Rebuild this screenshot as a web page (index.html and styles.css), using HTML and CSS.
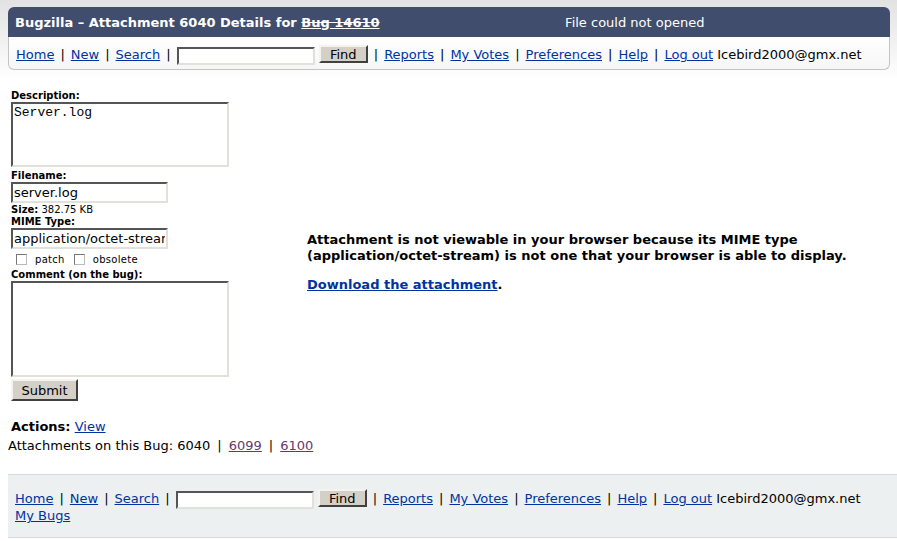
FILE: index.html
```html
<!DOCTYPE html>
<html lang="en">
<head>
    <meta charset="UTF-8">
    <title>Attachment 6040 Details for Bug 14610</title>
    <link rel="stylesheet" href="styles.css">
</head>
<body>
    <div class="header">
        <div class="title">Bugzilla &ndash; Attachment 6040 Details for <a href="#" class="bug-link">Bug 14610</a></div>
        <div class="message">File could not opened</div>
    </div>
    <div class="links top-links">
        <a href="#">Home</a><span class="sep">|</span><a href="#">New</a><span class="sep">|</span><a href="#">Search</a><span class="sep">|</span><input type="text" class="quicksearch"> <button class="btn find">Find</button><span class="sep">|</span><a href="#">Reports</a><span class="sep">|</span><a href="#">My Votes</a><span class="sep">|</span><a href="#">Preferences</a><span class="sep">|</span><a href="#">Help</a><span class="sep">|</span><a href="#">Log out</a> Icebird2000@gmx.net
    </div>

    <div class="attachment">
        <form class="edit-form">
            <label class="field-label">Description:</label>
            <textarea class="desc" rows="3">Server.log</textarea>
            <label class="field-label">Filename:</label>
            <input type="text" class="field" value="server.log">
            <div class="small"><b>Size:</b> 382.75 KB</div>
            <label class="field-label">MIME Type:</label>
            <input type="text" class="field" value="application/octet-stream">
            <div class="checks small">
                <input type="checkbox" class="check"> <span>patch</span>
                <input type="checkbox" class="check"> <span>obsolete</span>
            </div>
            <label class="field-label">Comment (on the bug):</label>
            <textarea class="comment"></textarea>
            <div><button type="button" class="btn submit">Submit</button></div>
        </form>
        <div class="viewer">
            <p class="notice">Attachment is not viewable in your browser because its MIME type (application/octet-stream) is not one that your browser is able to display.</p>
            <p class="notice"><a href="#">Download the attachment</a>.</p>
        </div>
    </div>

    <div class="actions"><b>Actions:</b> <a href="#">View</a></div>
    <div class="others">Attachments on this Bug: 6040<span class="sep">|</span><a href="#" class="visited">6099</a><span class="sep">|</span><a href="#" class="visited">6100</a></div>

    <div class="footer">
        <div class="links">
            <a href="#">Home</a><span class="sep">|</span><a href="#">New</a><span class="sep">|</span><a href="#">Search</a><span class="sep">|</span><input type="text" class="quicksearch"> <button class="btn find">Find</button><span class="sep">|</span><a href="#">Reports</a><span class="sep">|</span><a href="#">My Votes</a><span class="sep">|</span><a href="#">Preferences</a><span class="sep">|</span><a href="#">Help</a><span class="sep">|</span><a href="#">Log out</a> Icebird2000@gmx.net
        </div>
        <div class="links"><a href="#">My Bugs</a></div>
    </div>
</body>
</html>
```

FILE: styles.css
```css
body {
    font-family: "DejaVu Sans", Verdana, sans-serif;
    font-size: 13px;
    color: #000;
    margin: 0;
    padding: 7px 7px 0 8px;
    background: linear-gradient(#e2e2e2, #ffffff 80px) no-repeat;
    background-color: #fff;
}
a {
    color: #0033a0;
}
a.visited {
    color: #663a6c;
}
.header {
    display: flex;
    height: 30px;
    align-items: center;
    background-color: #404d6c;
    color: #fff;
    border-radius: 6px 6px 0 0;
    padding-left: 7px;
}
.title {
    font-weight: bold;
}
.bug-link {
    color: #fff;
    text-decoration: underline line-through;
}
.message {
    flex: 1;
    text-align: center;
}
.links {
    height: 18px;
    line-height: 18px;
    white-space: nowrap;
}
.sep {
    margin: 0 6px;
}
.top-links {
    height: 24px;
    padding: 8px 0 0 7px;
    border: 1px solid #c4c4c4;
    border-top: none;
    border-radius: 0 0 6px 6px;
    background: linear-gradient(#ffffff, #f6f6f6);
}
.quicksearch {
    box-sizing: border-box;
    width: 138px;
    height: 18px;
    padding: 0 2px;
    margin: 0;
    vertical-align: -1px;
    border: 2px solid;
    border-color: #555 #e2e0da #e2e0da #555;
    font: 12px "DejaVu Sans", sans-serif;
}
.btn {
    font-family: "DejaVu Sans", Verdana, sans-serif;
    font-size: 13px;
    background-color: #d4d0c8;
    border: 2px solid;
    border-color: #f4f3ef #404040 #404040 #f4f3ef;
    padding: 0;
    color: #000;
}
.find {
    box-sizing: border-box;
    width: 49px;
    height: 18px;
    line-height: 13px;
    vertical-align: 0;
}
.attachment {
    display: flex;
    align-items: flex-start;
    margin-top: 20px;
    padding-left: 3px;
}
.edit-form {
    display: flex;
    flex-direction: column;
    align-items: flex-start;
    width: 296px;
    flex: none;
}
.field-label {
    font-size: 10px;
    font-weight: bold;
    line-height: 12px;
}
.small {
    font-size: 10px;
    line-height: 12px;
}
.desc, .comment {
    width: 212px;
    border: 2px solid;
    border-color: #555 #e2e0da #e2e0da #555;
    padding: 1px 1px;
    font: 13px "Liberation Mono", monospace;
    resize: none;
    margin: 0 0 3px;
}
.desc {
    height: 59px;
}
.comment {
    height: 90px;
    margin-bottom: 2px;
}
.field {
    width: 151px;
    height: 17px;
    padding: 0 1px;
    border: 2px solid;
    border-color: #555 #e2e0da #e2e0da #555;
    font: 13px "DejaVu Sans", sans-serif;
    margin: 0 0 1px;
}
.checks {
    display: flex;
    align-items: center;
    height: 19px;
    padding-left: 5px;
    letter-spacing: 0.3px;
}
.check {
    appearance: none;
    width: 11px;
    height: 11px;
    margin: 0 8px 0 0;
    border: 1px solid;
    border-color: #777 #bbb #bbb #777;
    background: #fff;
}
.checks span {
    margin-right: 9px;
}
.submit {
    width: 67px;
    height: 22px;
}
.viewer {
    padding-top: 142px;
}
.notice {
    font-weight: bold;
    line-height: 16px;
    margin: 0 0 13px;
    width: 560px;
}
.actions {
    font-size: 13px;
    margin-top: 17px;
    padding-left: 3px;
    line-height: 18px;
}
.others {
    line-height: 20px;
}
.others .sep {
    margin: 0 7px;
}
.footer {
    margin: 18px -7px 0 0;
    padding: 14px 0 12px 7px;
    background-color: #ecf0f0;
    border-top: 1px solid #d8d8d8;
    border-bottom: 1px solid #d8d8d8;
}
```
